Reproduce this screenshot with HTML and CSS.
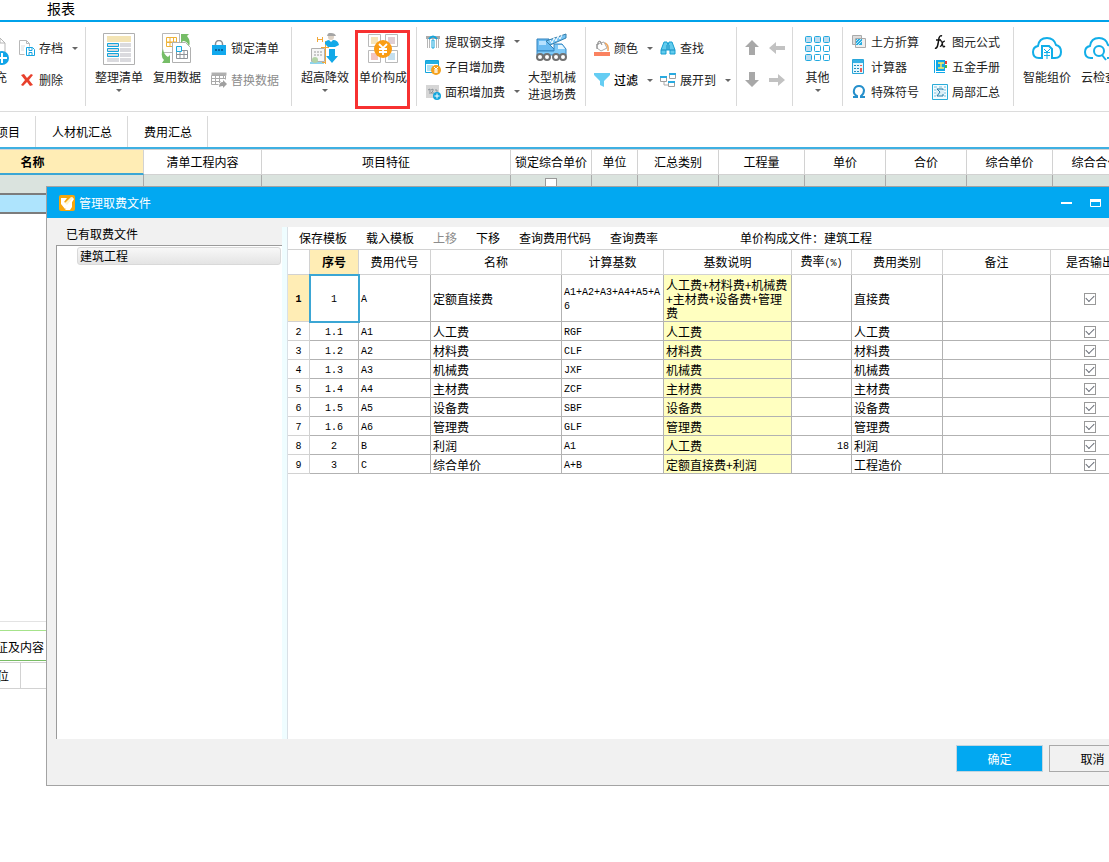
FILE: index.html
```html
<!DOCTYPE html>
<html lang="zh-CN">
<head>
<meta charset="utf-8">
<title>管理取费文件</title>
<link rel="stylesheet" href="styles.css">
</head>
<body>
<div class="app">
  <nav class="menu"><a class="menu-link" href="#">报表</a></nav>

  <div class="ribbon">
    <div class="group group-file">
      <button class="big big-cut"><span class="big-icon"><svg width="32" height="32" viewBox="0 0 32 32"><path d="M8 5h15l5 5v19H8z" fill="#fff" stroke="#b5b5b5"/><path d="M23 5v5h5" fill="none" stroke="#b5b5b5"/><circle cx="25" cy="25" r="7" fill="#12a5e8"/><path d="M20 25h10M25 20v10" stroke="#fff" stroke-width="2"/></svg></span><span class="cut-label">补充</span></button>
      <div class="stack two">
        <button class="small"><svg width="16" height="16" viewBox="0 0 16 16"><path d="M5.500 14.500h-5v-14h7l3 3v3M7.500.5v3h3" fill="none" stroke="#b8b8b8"/><path d="M2 6h4M2 8h3M2 10h3" stroke="#ddd"/><path d="M7.500 7.500h6l2 2v6h-8z" fill="#fff" stroke="#14a5e2"/><path d="M10 7.500v3h3v-3M10 15.500v-3h3v3" fill="none" stroke="#14a5e2"/></svg><span>存档</span><i class="caret"></i></button>
        <button class="small"><svg width="16" height="16" viewBox="0 0 16 16"><path d="M2 3l3-1 3 4 4-4 2 1-4 5 4 5-3 1-3-4-4 4-2-1 4-5z" fill="#e8402c"/></svg><span>删除</span></button>
      </div>
    </div>

    <div class="group group-list">
      <button class="big"><span class="big-icon"><svg width="32" height="32" viewBox="0 0 32 32"><path d="M.5.500h31v31H.5z" fill="#fff" stroke="#b0b0b0"/><path d="M4 3h24v6H4z" fill="#f3e4b5"/><path d="M17 10h11v4H17zM17 15h11v4H17zM17 20h11v4H17zM4 25h12v4H4zM17 25h11v4H17z" fill="#dadade"/><path d="M4.500 10.500h11v3h-11zM4.500 15.500h11v3h-11zM4.500 20.500h11v3h-11z" fill="#d5dade" stroke="#14a5dc"/></svg></span><span>整理清单</span><i class="caret"></i></button>
      <button class="big"><span class="big-icon"><svg width="32" height="32" viewBox="0 0 32 32"><path d="M1.500.5h17v19h-17z" fill="#fff" stroke="#b8b8b8"/><path d="M5.500 4.500h10v5h-10zM5.500 9.500v4M5.500 13.500h7M9 4v10M12.500 4v10M5 9h11" fill="none" stroke="#eeb338"/><path d="M11.500 9.500h13l5 5v15h-18z" fill="#fff" stroke="#b0b0b0"/><path d="M15.500 17.500h11v8h-11zM15 21.500h12M19 17v9M23 17v9" fill="none" stroke="#8e9399"/><path d="M15.500 13.500h5v5h-5z" fill="#e8f7ff" stroke="#18a9df"/><path d="M20 1h8l-2 2q4 5 2 10-2-5-6-5l-2 2z" fill="#76bd67"/><path d="M2 16q1 6 5 8l2-2v8H1l2-3q-4-4-1-11z" fill="#76bd67"/></svg></span><span>复用数据</span></button>
      <div class="stack two">
        <button class="small"><svg width="16" height="16" viewBox="0 0 16 16"><path d="M4.500 6V4a3.500 3.500 0 0 1 7 0v2" fill="none" stroke="#888d93" stroke-width="1.500"/><path d="M1 5h14v10H1z" fill="#12a9ed"/><path d="M4 9h2v2H4zM7 9h2v2H7zM10 9h2v2h-2z" fill="#0766a1"/></svg><span>锁定清单</span></button>
        <button class="small disabled" disabled><svg width="16" height="16" viewBox="0 0 16 16"><path d="M.5.500h15v3H.5z" fill="#b0b0b0"/><path d="M.5 3.500h14v4M.5 3.500v9h7M.5 6.500h14M.5 9.500h9M4.500 3v10M8.500 3v8M12.500 3v4" fill="none" stroke="#aaa"/><path d="M8 15q0-5 4-5V8l4 4-4 4v-2q-2 0-4 1" fill="#a0a0a0"/></svg><span>替换数据</span></button>
      </div>
    </div>

    <div class="group group-price">
      <button class="big"><span class="big-icon"><svg width="32" height="32" viewBox="0 0 32 32"><path d="M2.500 15.500h13v13h-13z" fill="#f6f6f6" stroke="#b0b0b0"/><path d="M5 18h2v2H5zM8 18h2v2H8zM11 18h2v2h-2zM5 21h2v2H5zM8 21h2v2H8zM11 21h2v2h-2z" fill="#c8c8c8"/><path d="M1 30h14" stroke="#1fa9db"/><circle cx="6" cy="27" r="3" fill="#b2d3a5"/><path d="M8.500 4v5M13.500 4v5M8 6.500h6M16.500 8v23M12 14.500h8M13 29.500h4" fill="none" stroke="#f1a83a"/><circle cx="22" cy="4" r="3" fill="#ddd2c5"/><path d="M18 3q1-4 4-3 4 0 5 3z" fill="#a5a5a5"/><path d="M16 9q2-2 4-2l2 2 2-2q5 0 6 5l-4 2h-7l-3-3z" fill="#12a9e8"/><path d="M20 16h6v7h3l-6 7-6-7h3z" fill="#12a9e8"/></svg></span><span>超高降效</span><i class="caret"></i></button>
      <button class="big marked"><span class="big-icon"><svg width="32" height="32" viewBox="0 0 32 32"><path d="M1.500 1.500h12v12h-12zM18.500 1.500h12v12h-12zM1.500 17.500h12v12h-12zM18.500 17.500h12v12h-12z" fill="#fff" stroke="#b9b9b9"/><path d="M4 4h7v7H4z" fill="#f5e4b9"/><path d="M21 4h7v7h-7z" fill="#dfcfd4"/><path d="M4 20h7v7H4z" fill="#f2c5c1"/><path d="M21 20h7v7h-7z" fill="#c4dfef"/><circle cx="16" cy="16" r="9" fill="#fa9d13"/><path d="M12 11l4 4 4-4M12 16h8M12 19h8M16 15v7" fill="none" stroke="#fff" stroke-width="1.800"/></svg></span><span>单价构成</span></button>
    </div>

    <div class="group group-fee">
      <div class="stack three">
        <button class="small"><svg width="16" height="16" viewBox="0 0 16 16"><path d="M1 2h14v3H1z" fill="#aaa"/><path d="M2.500 5v9M4.500 5v9M11.500 5v9M13.500 5v9" stroke="#b7b7b7"/><path d="M7 6h2v8H7z" fill="#fff" stroke="#14a5dc"/><path d="M4 5q4-5 8 0" stroke="#14a5dc" stroke-width="2" fill="none"/></svg><span>提取钢支撑</span><i class="caret"></i></button>
        <button class="small"><svg width="16" height="16" viewBox="0 0 16 16"><path d="M.5 1.500h13v12H.5z" fill="#fff" stroke="#14a5dc"/><path d="M1 2h12v3H1z" fill="#22afe2"/><path d="M2 7h6M2 9h5M2 11h5" stroke="#62c3e6"/><circle cx="11" cy="11" r="5" fill="#f5a11c"/><path d="M9 8l2 2 2-2M9 11h4M9 13h4M11 10v4" fill="none" stroke="#fff"/></svg><span>子目增加费</span></button>
        <button class="small"><svg width="16" height="16" viewBox="0 0 16 16"><path d="M1 1h13v13H1z" fill="#d6d6d6"/><path d="M3 6l2-1v5M6 6l2-1v2l-2 2h3M10 6h2v5h-2" fill="none" stroke="#8d9298"/><circle cx="12" cy="12" r="4" fill="#12a5dc"/><path d="M9.500 12h5M12 9.500v5" stroke="#fff"/></svg><span>面积增加费</span><i class="caret"></i></button>
      </div>
      <button class="big"><span class="big-icon"><svg width="32" height="32" viewBox="0 0 32 32"><path d="M1 6h12v5l7 7H1z" fill="#6bbcf2" stroke="#3181bd"/><path d="M3 8h7v4H3z" fill="#b7e2ff"/><path d="M10 8L30 1v4l-16 7z" fill="#74c3f4" stroke="#347da9"/><path d="M14 7l2 3 2-5 2 3 2-5 2 3 2-4" fill="none" stroke="#fff"/><path d="M18 11h8l4 5v6H1v-4h17z" fill="#7fc9f7" stroke="#3486c2"/><path d="M22 12h4l3 4h-7z" fill="#e5f6ff"/><g fill="#fff" stroke="#717171" stroke-width="2"><circle cx="4" cy="24" r="3"/><circle cx="11" cy="24" r="3"/><circle cx="20" cy="24" r="3"/><circle cx="27" cy="24" r="3"/></g></svg></span><span>大型机械<br>进退场费</span></button>
    </div>

    <div class="group group-view">
      <div class="stack two">
        <button class="small"><svg width="16" height="16" viewBox="0 0 16 16"><path d="M0 12h16v4H0z" fill="#fa8260"/><path d="M3 4l7-2 3 6-6 3-4-3z" fill="#fff" stroke="#aaa"/><path d="M4 5q-1-4 2-4l2 4M3 4v5" fill="none" stroke="#888"/><path d="M11 3q4 2 3 8" fill="none" stroke="#f0a45b" stroke-width="1.500"/></svg><span>颜色</span><i class="caret"></i></button>
        <button class="small strong"><svg width="16" height="16" viewBox="0 0 16 16"><path d="M0 1h16v2l-6 6v6l-4-2V9L0 3z" fill="#65cdf3"/></svg><span>过滤</span><i class="caret"></i></button>
      </div>
      <div class="stack two">
        <button class="small"><svg width="16" height="16" viewBox="0 0 16 16"><path d="M4 2h3l1 3 1-3h3l3 8v4h-5v-4H6v4H1v-4z" fill="#62cbed" stroke="#179fd1"/><path d="M7 5v5M9 5v5M1 10h5M10 10h5" stroke="#168dc1"/></svg><span>查找</span></button>
        <button class="small"><svg width="16" height="16" viewBox="0 0 16 16"><g fill="#fff" stroke="#9e9e9e"><path d="M.5 4.500h6v5h-6zM9.500 1.500h6v5h-6zM8.500 9.500h6v5h-6z"/></g><path d="M0 4h7v2H0zM9 1h7v2H9zM8 9h7v2H8z" fill="#29aae0"/><path d="M4 10v3h4" fill="none" stroke="#aaa"/></svg><span>展开到</span><i class="caret"></i></button>
      </div>
    </div>

    <div class="group group-move">
      <button class="arrow" aria-label="上移"><svg width="16" height="16" viewBox="0 0 16 16"><path d="M8 0l7 7h-4v8H5V7H1z" fill="#a8a8a8"/></svg></button>
      <button class="arrow" aria-label="左移"><svg width="16" height="16" viewBox="0 0 16 16"><path d="M0 8l7-6v4h9v4H7v4z" fill="#c2c2c2"/></svg></button>
      <button class="arrow" aria-label="下移"><svg width="16" height="16" viewBox="0 0 16 16"><path d="M8 15l7-7h-4V0H5v8H1z" fill="#a8a8a8"/></svg></button>
      <button class="arrow" aria-label="右移"><svg width="16" height="16" viewBox="0 0 16 16"><path d="M16 8L9 2v4H0v4h9v4z" fill="#c2c2c2"/></svg></button>
    </div>

    <div class="group group-other">
      <button class="big"><span class="big-icon"><svg width="26" height="26" viewBox="0 0 26 26"><g stroke="#20a9df" fill="#fff"><g fill="#bddcf0"><rect x=".5" y=".5" width="6" height="6" rx="1"/><rect x="9.500" y=".5" width="6" height="6" rx="1"/><rect x="18.500" y=".5" width="6" height="6" rx="1"/><rect x=".5" y="9.500" width="6" height="6" rx="1"/><rect x=".5" y="18.500" width="6" height="6" rx="1"/></g><rect x="9.500" y="9.500" width="6" height="6" rx="1"/><rect x="18.500" y="9.500" width="6" height="6" rx="1"/><rect x="9.500" y="18.500" width="6" height="6" rx="1"/><rect x="18.500" y="18.500" width="6" height="6" rx="1"/></g></svg></span><span>其他</span><i class="caret"></i></button>
    </div>

    <div class="group group-tools">
      <div class="stack three">
        <button class="small"><svg width="16" height="16" viewBox="0 0 16 16"><path d="M1.500 1.500h9v9h-9z" fill="#ddd" stroke="#aaa"/><path d="M4.500 4.500h10v9h-10z" fill="#eee" stroke="#aaa"/><path d="M5 5h6v6H5z" fill="#27addf"/><path d="M5 7l2-2M5 10l5-5M7 11l4-4" stroke="#bdeaff"/></svg><span>土方折算</span></button>
        <button class="small"><svg width="16" height="16" viewBox="0 0 16 16"><path d="M1.500.5h11v14h-11z" fill="#e5f7fe" stroke="#29a6d9"/><path d="M2 1h10v3H2z" fill="#35b1e5"/><path d="M3 6h2v1H3zM6 6h2v1H6zM3 9h2v1H3zM6 9h2v1H6zM3 12h2v1H3zM6 12h2v1H6z" fill="#228dbc"/><path d="M9 6h2v1H9zM9 9h2v4H9z" fill="#e75e59"/></svg><span>计算器</span></button>
        <button class="small"><svg width="16" height="16" viewBox="0 0 16 16"><path d="M2 13h4v-1q-4-2-3-6 1-4 5-4 4 0 5 4 0 4-3 6v1h4" fill="none" stroke="#258fcb" stroke-width="2"/></svg><span>特殊符号</span></button>
      </div>
      <div class="stack three">
        <button class="small"><svg width="16" height="16" viewBox="0 0 16 16"><path d="M3 14q2 1 3-4l1-6q1-3 3-2M4 6h5" fill="none" stroke="#111" stroke-width="1.500"/><path d="M8 7q2-1 2 2l1 3q0 2 2 0M13 7q-2 0-3 3t-2 2" fill="none" stroke="#111" stroke-width="1.200"/></svg><span>图元公式</span></button>
        <button class="small"><svg width="16" height="16" viewBox="0 0 16 16"><path d="M2 1h11v13H2z" fill="#10a8e8"/><path d="M3.500 1v13" stroke="#fff"/><path d="M14 2v3" stroke="#e53e36" stroke-width="2"/><path d="M14 6v3" stroke="#51b747" stroke-width="2"/><path d="M6 4h6M6 9h6M9 4v5" stroke="#ffeb62" stroke-width="1.400"/><path d="M3 12.500h11" stroke="#fff"/></svg><span>五金手册</span></button>
        <button class="small"><svg width="16" height="16" viewBox="0 0 16 16"><path d="M.5.500h15v15H.5z" fill="#f4fcff" stroke="#2aacd9"/><path d="M2 3h3M7 3h3M12 3h2M2 6h2M12 6h2M2 9h2M12 9h2M2 12h2M12 12h2" stroke="#79bfdc"/><path d="M4 4h8v8H4z" fill="#dceef6"/><path d="M11 6V5H5l3 3-3 4h6v-2" fill="none" stroke="#267da7"/></svg><span>局部汇总</span></button>
      </div>
    </div>

    <div class="group group-cloud">
      <button class="big"><span class="big-icon"><svg width="32" height="32" viewBox="0 0 32 32"><g fill="none" stroke="#12aee8" stroke-width="2"><path d="M10 25H8q-6 0-6-6 0-5 5-6 1-8 9-8 7 0 9 7 5 1 5 7 0 6-6 6h-3"/><path d="M11 26V13h7l3 3v10"/></g><path d="M13 16l3 3 3-3M13 19.500h6M13 22.500h6M16 19v7" fill="none" stroke="#12aee8"/></svg></span><span>智能组价</span></button>
      <button class="big narrow"><span class="big-icon"><svg width="32" height="32" viewBox="0 0 32 32"><g fill="none" stroke="#12aee8" stroke-width="2"><path d="M10 25H8q-6 0-6-6 0-5 5-6 1-8 9-8 7 0 9 7 5 1 5 7 0 6-6 6"/><circle cx="16" cy="18" r="5"/><path d="M19 22l4 5"/></g></svg></span><span>云检查</span></button>
    </div>
  </div>

  <nav class="tabs">
    <a class="tab tab-cut" href="#">项目</a>
    <a class="tab" href="#">人材机汇总</a>
    <a class="tab" href="#">费用汇总</a>
  </nav>

  <main class="workspace">
    <table class="sheet">
      <colgroup><col class="s1"><col class="s2"><col class="s3"><col class="s4"><col class="s5"><col class="s4"><col class="s6"><col class="s4"><col class="s4"><col class="s6"><col class="s6"></colgroup>
      <thead><tr><th class="current">名称</th><th>清单工程内容</th><th>项目特征</th><th>锁定综合单价</th><th>单位</th><th>汇总类别</th><th>工程量</th><th>单价</th><th>合价</th><th>综合单价</th><th>综合合价</th></tr></thead>
      <tbody>
        <tr class="total"><td></td><td></td><td></td><td><input type="checkbox" class="check" aria-label="锁定综合单价"></td><td></td><td></td><td></td><td></td><td></td><td></td><td></td></tr>
        <tr class="picked"><td colspan="11"></td></tr>
      </tbody>
    </table>
  </main>

  <section class="detail">
    <div class="detail-tabs"><a class="detail-tab" href="#">特征及内容</a></div>
    <div class="detail-head"><span class="detail-unit">单位</span></div>
  </section>
</div>

<div class="dialog" role="dialog" aria-labelledby="dialog-title">
  <header class="titlebar">
    <svg width="16" height="16" viewBox="0 0 16 16"><rect width="16" height="16" rx="2" fill="#f7a60b"/><path d="M2 3h6l-3 4 2 1 6-6 2 2-5 8-4 2-4-5zM11 9l2-2v5l-2 3H6z" fill="#fff"/><path d="M6 8l6-6 2 1-6 7z" fill="#fff3ca"/></svg>
    <h1 class="title" id="dialog-title">管理取费文件</h1>
    <button class="winbtn" aria-label="最小化"><svg width="12" height="10" viewBox="0 0 12 10"><path d="M0 4h11v2H0z" fill="#fff"/></svg></button>
    <button class="winbtn" aria-label="最大化"><svg width="12" height="10" viewBox="0 0 12 10"><path d="M.5 1.500h10v7H.5z" fill="none" stroke="#fff"/><path d="M0 1h11v3H0z" fill="#fff"/></svg></button>
  </header>
  <div class="panes">
    <aside class="files">
      <h2 class="files-title">已有取费文件</h2>
      <div class="tree"><button class="tree-item">建筑工程</button></div>
    </aside>
    <div class="splitter"></div>
    <section class="editor">
      <div class="toolbar">
        <button class="tool">保存模板</button><button class="tool">载入模板</button><button class="tool disabled" disabled>上移</button><button class="tool">下移</button><button class="tool">查询费用代码</button><button class="tool">查询费率</button>
        <span class="current-file">单价构成文件：建筑工程</span>
      </div>
      <table class="fees">
        <colgroup><col class="c0"><col class="c1"><col class="c2"><col class="c3"><col class="c4"><col class="c5"><col class="c6"><col class="c7"><col class="c8"><col class="c9"></colgroup>
        <thead><tr><th></th><th class="current">序号</th><th>费用代号</th><th>名称</th><th>计算基数</th><th>基数说明</th><th>费率<span class="code">(%)</span></th><th>费用类别</th><th>备注</th><th>是否输出</th></tr></thead>
        <tbody>
          <tr class="tall"><th class="code current">1</th><td class="code mid focus">1</td><td class="code">A</td><td>定额直接费</td><td class="code">A1+A2+A3+A4+A5+A6</td><td class="note">人工费+材料费+机械费+主材费+设备费+管理费</td><td></td><td>直接费</td><td></td><td class="mid"><input type="checkbox" class="check" checked aria-label="输出 1"></td></tr>
          <tr><th class="code">2</th><td class="code mid">1.1</td><td class="code">A1</td><td>人工费</td><td class="code">RGF</td><td class="note">人工费</td><td></td><td>人工费</td><td></td><td class="mid"><input type="checkbox" class="check" checked aria-label="输出 2"></td></tr>
          <tr><th class="code">3</th><td class="code mid">1.2</td><td class="code">A2</td><td>材料费</td><td class="code">CLF</td><td class="note">材料费</td><td></td><td>材料费</td><td></td><td class="mid"><input type="checkbox" class="check" checked aria-label="输出 3"></td></tr>
          <tr><th class="code">4</th><td class="code mid">1.3</td><td class="code">A3</td><td>机械费</td><td class="code">JXF</td><td class="note">机械费</td><td></td><td>机械费</td><td></td><td class="mid"><input type="checkbox" class="check" checked aria-label="输出 4"></td></tr>
          <tr><th class="code">5</th><td class="code mid">1.4</td><td class="code">A4</td><td>主材费</td><td class="code">ZCF</td><td class="note">主材费</td><td></td><td>主材费</td><td></td><td class="mid"><input type="checkbox" class="check" checked aria-label="输出 5"></td></tr>
          <tr><th class="code">6</th><td class="code mid">1.5</td><td class="code">A5</td><td>设备费</td><td class="code">SBF</td><td class="note">设备费</td><td></td><td>设备费</td><td></td><td class="mid"><input type="checkbox" class="check" checked aria-label="输出 6"></td></tr>
          <tr><th class="code">7</th><td class="code mid">1.6</td><td class="code">A6</td><td>管理费</td><td class="code">GLF</td><td class="note">管理费</td><td></td><td>管理费</td><td></td><td class="mid"><input type="checkbox" class="check" checked aria-label="输出 7"></td></tr>
          <tr><th class="code">8</th><td class="code mid">2</td><td class="code">B</td><td>利润</td><td class="code">A1</td><td class="note">人工费</td><td class="code end">18</td><td>利润</td><td></td><td class="mid"><input type="checkbox" class="check" checked aria-label="输出 8"></td></tr>
          <tr><th class="code">9</th><td class="code mid">3</td><td class="code">C</td><td>综合单价</td><td class="code">A+B</td><td class="note">定额直接费+利润</td><td></td><td>工程造价</td><td></td><td class="mid"><input type="checkbox" class="check" checked aria-label="输出 9"></td></tr>
        </tbody>
      </table>
    </section>
  </div>
  <footer class="actions"><button class="btn primary">确定</button><button class="btn">取消</button></footer>
</div>
</body>
</html>
```
FILE: styles.css
```css
* { box-sizing: border-box; }
body {
  margin: 0;
  position: relative;
  height: 100vh;
  overflow: hidden;
  background: #fff;
  color: #000;
  font: 12px/16px "Noto Sans CJK SC", sans-serif;
}
button { padding: 0; border: 0; background: none; font: inherit; color: inherit; white-space: nowrap; }
a { color: inherit; text-decoration: none; }
h1, h2 { margin: 0; font: inherit; }
svg { display: block; flex: none; }

.app { display: flex; flex-direction: column; height: 100%; overflow: hidden; }
.menu { flex: none; height: 22px; padding-left: 47px; border-bottom: 2px solid #00a2ea; font-size: 14px; }

/* Ribbon */
.ribbon { flex: none; display: flex; height: 90px; padding: 5px 0; border-bottom: 1px solid #dcdcdc; color: #222; overflow: hidden; }
.group { flex: none; display: flex; height: 79px; border-right: 1px solid #d9d9d9; }
.group-file { width: 86px; gap: 10px; }
.group-list { width: 206px; padding-left: 9px; gap: 10px; }
.group-price { width: 125px; padding-left: 9px; gap: 10px; }
.group-fee { width: 169px; padding-left: 8px; gap: 8px; }
.group-view { width: 151px; padding-left: 8px; gap: 7px; }
.group-move { width: 56px; padding: 13px 7px 0; display: grid; grid-template-columns: 16px 16px; gap: 16px 9px; align-content: start; }
.group-other { width: 50px; }
.group-tools { width: 171px; padding-left: 8px; gap: 13px; }
.group-cloud { border-right: 0; padding-left: 9px; gap: 10px; }

.big { display: flex; flex-direction: column; align-items: center; min-width: 48px; padding-top: 4px; line-height: 17px; }
.big-icon { display: flex; align-items: center; height: 37px; padding-bottom: 2px; }
.big .caret { margin-top: 4px; }
.big-cut { width: 9px; min-width: 0; align-items: flex-end; overflow: hidden; }
.cut-label { margin-right: 2px; }
.narrow { min-width: 36px; }
.group-other .big { width: 49px; }
.marked { position: relative; }
.marked::after { content: ""; position: absolute; inset: 3px -3px -3px -4px; border: 3px solid #f73131; }

.stack { display: flex; flex-direction: column; align-items: flex-start; }
.two { padding-top: 9px; gap: 8px; }
.three { padding-top: 2px; }
.small { display: flex; align-items: center; gap: 4px; height: 24px; }
.three .small { height: 25px; }
.small .caret { margin-left: 5px; }
.strong { color: #000; font-weight: 500; }
.disabled { color: #8c8c8c; }
.caret { width: 0; border: 3px solid transparent; border-top-color: #666; border-bottom: 0; }

/* Page tabs */
.tabs { flex: none; display: flex; height: 37px; padding-top: 4px; border-bottom: 2px solid #3eb0e2; }
.tab { padding: 8px 15px 0 16px; border-right: 1px solid #d9d9d9; }
.tab-cut { display: flex; justify-content: flex-end; width: 36px; overflow: hidden; white-space: nowrap; }

/* Background sheet */
.workspace { flex: 1; min-height: 0; overflow: hidden; border-top: 1px solid #d2d2d2; }
table { table-layout: fixed; border-collapse: separate; border-spacing: 0; }
th { font-weight: 400; }
.sheet { width: 1139px; }
.sheet th, .sheet td { padding: 0; border-right: 1px solid #d2d2d2; border-bottom: 1px solid #d2d2d2; text-align: center; white-space: nowrap; }
.sheet th { height: 25px; }
.sheet .current { padding-right: 78px; background: #ffedb5; border-bottom: 2px solid #3ba6d4; font-weight: 700; }
.sheet .total td { height: 18px; background: #dae3de; border-right-color: #aaa; border-bottom: 0; }
.sheet .picked td { height: 21px; background: #aee4fd; border: solid #7c7c7c; border-width: 2px 0; }
.s1 { width: 144px; }
.s2 { width: 118px; }
.s3 { width: 249px; }
.s4 { width: 81px; }
.s5 { width: 46px; }
.s6 { width: 86px; }

.check { appearance: none; display: block; width: 12px; height: 12px; margin: 0 auto; border: 1px solid #999; background: #fff; }
.check:checked { display: grid; place-items: center; }
.check:checked::before { content: ""; width: 7px; height: 4px; margin-bottom: 2px; border: solid #666b75; border-width: 0 0 1px 1px; transform: rotate(-45deg); }

/* Lower pane */
.detail { flex: none; height: 241px; padding-top: 8px; border-top: 1px solid #e3e3e3; }
.detail-tabs { height: 31px; padding-top: 8px; border-top: 1px solid #a6e38b; border-bottom: 1px solid #78bd64; }
.detail-tab { display: flex; justify-content: flex-end; width: 44px; overflow: hidden; white-space: nowrap; }
.detail-head { display: flex; height: 27px; margin-top: 1px; border: solid #d2d2d2; border-width: 1px 0; }
.detail-unit { display: flex; justify-content: flex-end; align-items: center; width: 21px; padding-right: 11px; border-right: 1px solid #d2d2d2; overflow: hidden; white-space: nowrap; }

/* Dialog window: runs past the right edge of the screen */
.dialog { position: absolute; top: 186px; bottom: 76px; left: 46px; right: -40px; display: flex; flex-direction: column; border: 1px solid #a3a3a3; background: #f1f1f1; }
.titlebar { flex: none; display: flex; align-items: center; height: 31px; padding: 0 46px 0 12px; background: #02a8f1; color: #fff; }
.title { flex: 1; margin-left: 4px; }
.winbtn + .winbtn { margin-left: 17px; }
.panes { flex: 1; min-height: 0; display: flex; padding: 9px 14px 0 9px; }
.files { flex: none; width: 226px; display: flex; flex-direction: column; }
.files-title { height: 18px; padding-left: 10px; line-height: 14px; }
.tree { flex: 1; padding: 1px 1px 0 20px; border: solid #9b9b9b; border-width: 1px 0 0 1px; background: #fff; }
.tree-item { display: block; width: 100%; height: 18px; padding-left: 2px; border: 1px solid #d9d9d9; border-radius: 3px; background: linear-gradient(#f8f8f8, #e4e4e4); line-height: 14px; text-align: left; }
.splitter { flex: none; width: 6px; border-right: 1px solid #d9e0e6; background: #effdff; }
.editor { flex: 1; min-width: 0; background: #fff; }
.toolbar { display: flex; align-items: center; gap: 19px; height: 22px; padding-left: 11px; white-space: nowrap; }
.current-file { margin-left: 63px; }

/* Fee table */
.fees { width: 842px; line-height: 14px; border-top: 1px solid #d2d2d2; }
.fees th, .fees td { height: 19px; padding: 1px 2px 0; border-right: 1px solid #b2b2b2; border-bottom: 1px solid #b2b2b2; text-align: left; }
.fees th { padding: 0; border-color: #d2d2d2; text-align: center; }
.fees thead th { height: 25px; }
.fees tbody .code { padding-top: 3px; }
.fees .tall td, .fees .tall th { height: 47px; }
.fees .current { background: #ffedb5; font-weight: 700; }
.fees thead .current { border-bottom-color: #3ba6d4; }
.fees .note { background: #ffffc0; word-break: break-all; }
.fees .mid { text-align: center; }
.fees .end { text-align: right; }
.fees .focus { outline: 2px solid #3ba6d4; outline-offset: -1px; }
.code { font-family: "Liberation Mono", "Noto Sans CJK SC", monospace; font-size: 10px; word-break: break-all; }
.c0 { width: 22px; }
.c1 { width: 49px; }
.c2 { width: 72px; }
.c3 { width: 131px; }
.c4 { width: 102px; }
.c5 { width: 128px; }
.c6 { width: 60px; }
.c7 { width: 91px; }
.c8 { width: 108px; }
.c9 { width: 79px; }

.actions { flex: none; display: flex; justify-content: flex-end; gap: 6px; height: 46px; padding: 6px 12px 0; }
.btn { width: 87px; height: 27px; border: 1px solid #a9a9a9; }
.primary { border-color: #c3d5df; background: #02a8f1; color: #fff; }
```
